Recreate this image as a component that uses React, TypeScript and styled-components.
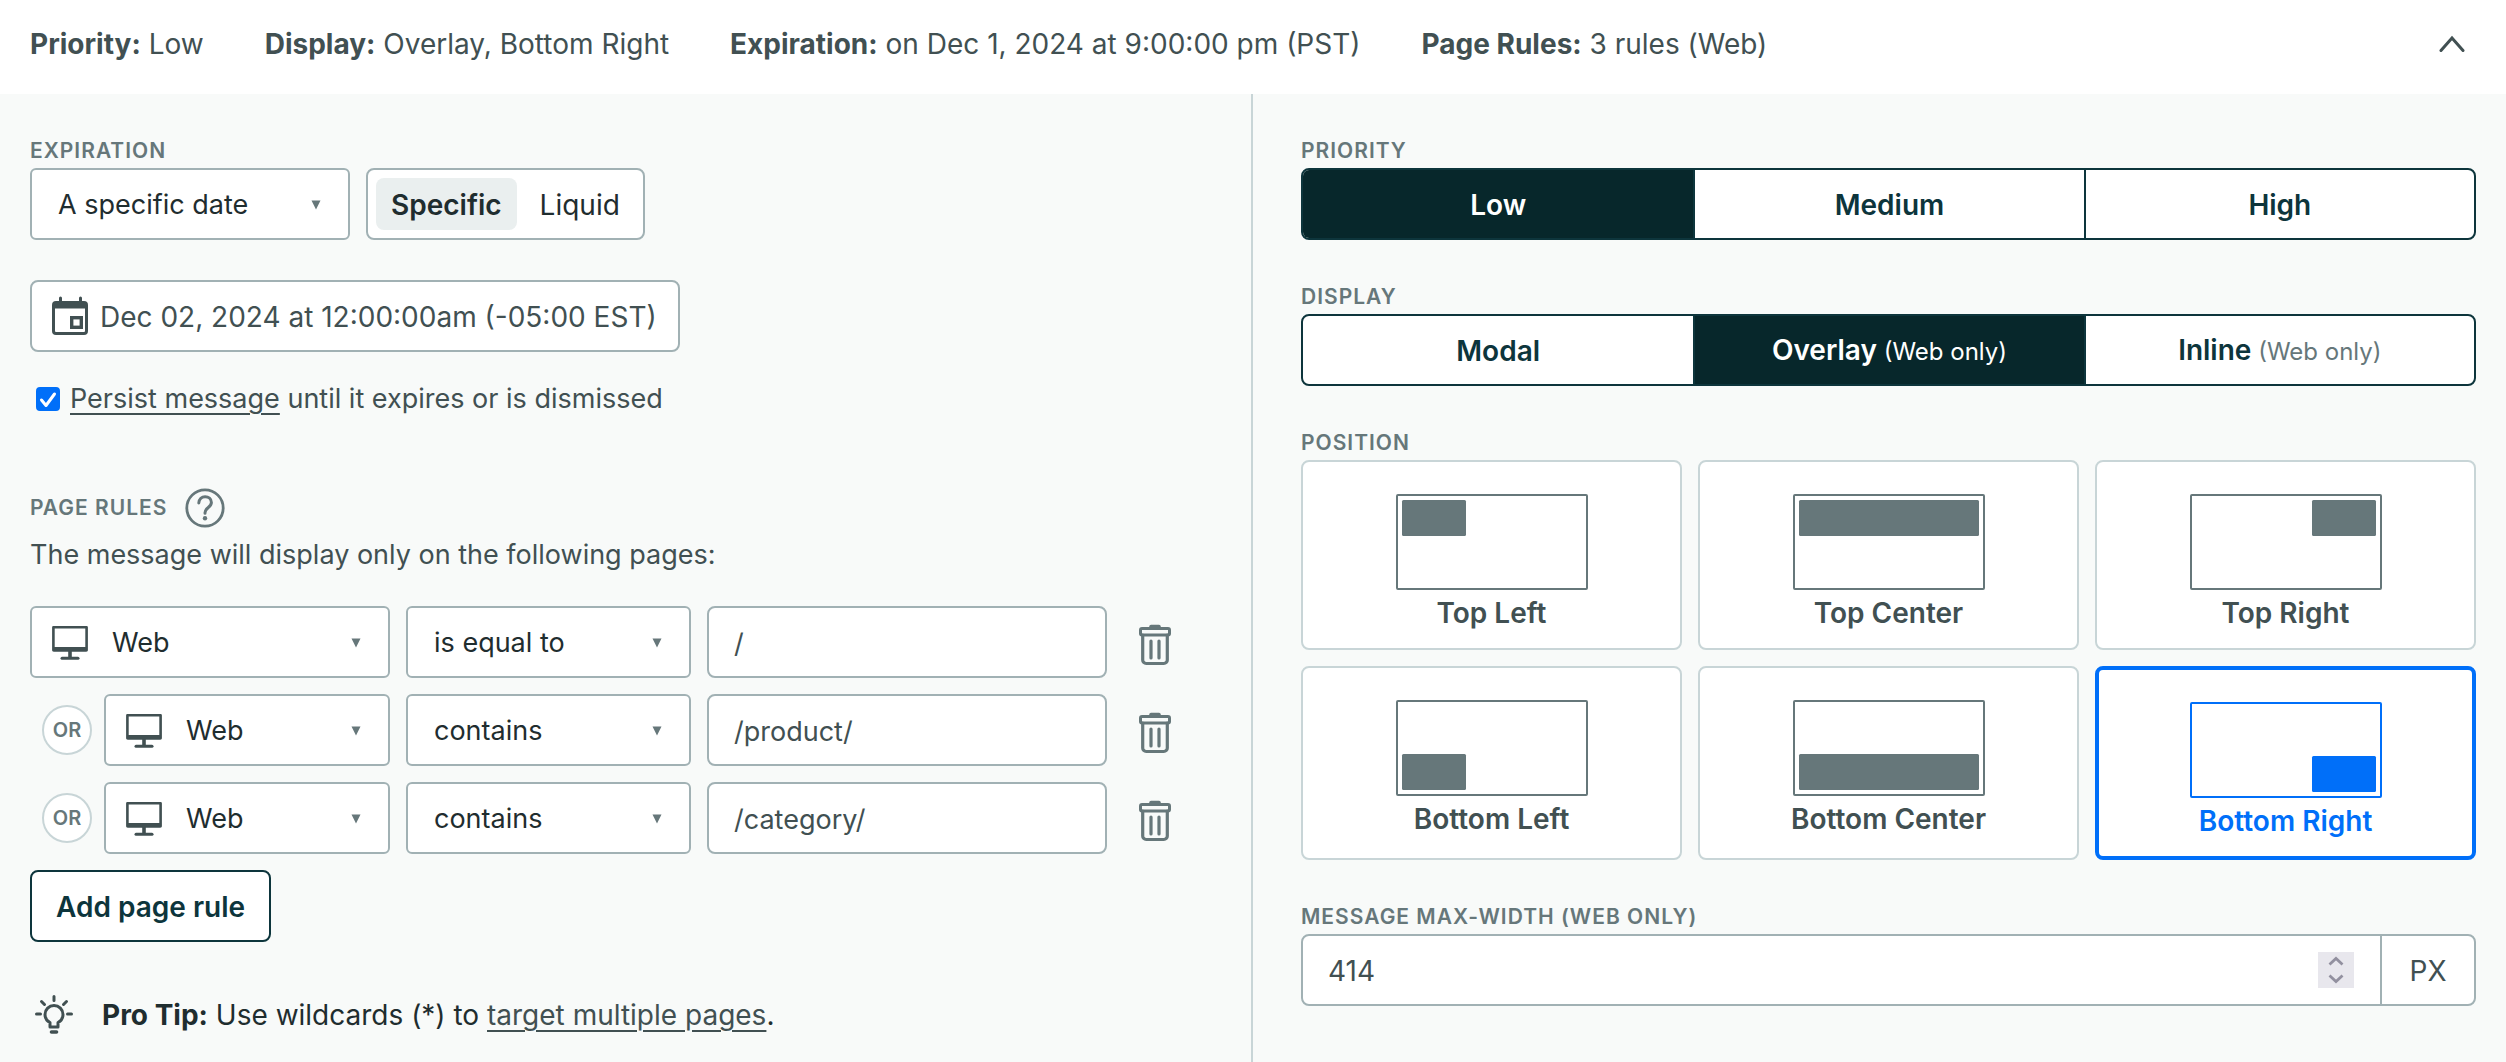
import React, { useState } from "react";
import styled, { createGlobalStyle, css } from "styled-components";

const c = {
  ink: "#1f2d2f",
  text: "#415052",
  muted: "#66777a",
  field: "#a1b1b4",
  line: "#c8d5d7",
  panel: "#f8faf9",
  brand: "#0d353c",
  brandDark: "#07272b",
  tint: "#eaefef",
  blue: "#006ff9",
};

const GlobalStyle = createGlobalStyle`
  *, *::before, *::after { box-sizing: border-box; }
  body {
    margin: 0;
    background: ${c.panel};
    color: ${c.text};
    font-family: Inter, "Liberation Sans", sans-serif;
    font-size: 28px;
    line-height: 42px;
  }
  button, input, select { font: inherit; color: inherit; margin: 0; }
  button { cursor: pointer; }
`;

const Header = styled.header`
  display: flex;
  align-items: center;
  justify-content: space-between;
  background: #fff;
  padding: 23px 34px 29px 30px;
`;
const Summary = styled.div`
  display: flex;
  flex-wrap: wrap;
  gap: 0 61px;
  strong { font-weight: 700; }
`;
const IconButton = styled.button`
  display: flex;
  align-items: center;
  justify-content: center;
  border: 0;
  padding: 0;
  background: transparent;
  color: ${c.muted};
`;
const CollapseButton = styled(IconButton)`
  width: 40px;
  height: 42px;
  color: ${c.text};
`;
const DeleteButton = styled(IconButton)`
  padding-top: 6px;
`;
const Columns = styled.main`
  display: grid;
  grid-template-columns: minmax(0, 1fr) minmax(0, 1fr);
`;
const LeftPanel = styled.section`
  border-right: 2px solid ${c.line};
  padding: 40px 64px 26px 30px;
`;
const RightPanel = styled.section`
  display: flex;
  flex-direction: column;
  gap: 40px;
  padding: 40px 30px 40px 48px;
`;
const labelText = css`
  display: block;
  color: ${c.muted};
  font-size: 21px;
  font-weight: 600;
  line-height: 34px;
  letter-spacing: 1px;
  text-transform: uppercase;
`;
const Label = styled.label`${labelText}`;
const GroupLabel = styled.div`${labelText}`;

const fieldBox = css`
  height: 72px;
  border: 2px solid ${c.field};
  border-radius: 8px;
  background: #fff;
`;
const Inline = styled.div`
  display: flex;
  gap: 16px;
`;
const SelectBox = styled.div<{ $width?: number }>`
  ${fieldBox}
  position: relative;
  display: flex;
  align-items: center;
  border-radius: 6px;
  min-width: 0;
  width: ${(p) => (p.$width ? `${p.$width}px` : "auto")};
  flex: ${(p) => (p.$width ? "none" : "1")};
`;
const Select = styled.select<{ $icon?: boolean }>`
  appearance: none;
  width: 100%;
  height: 100%;
  border: 0;
  background: transparent;
  color: ${c.ink};
  font-size: 27px;
  padding: 2px 48px 0 ${(p) => (p.$icon ? 80 : 26)}px;
`;
const Caret = styled.svg`
  position: absolute;
  right: 26px;
  top: 30px;
  pointer-events: none;
`;
const LeadIcon = styled.span`
  position: absolute;
  left: 20px;
  top: 16px;
  display: flex;
  color: ${c.text};
  pointer-events: none;
`;
const Toggle = styled.div`
  ${fieldBox}
  display: flex;
  gap: 8px;
  padding: 8px;
`;
const ToggleItem = styled.button<{ $on: boolean }>`
  border: 0;
  border-radius: 8px;
  padding: 2px 15px 0;
  background: ${(p) => (p.$on ? c.tint : "transparent")};
  color: ${c.ink};
  font-weight: ${(p) => (p.$on ? 600 : 400)};
`;
const DateField = styled.div`
  ${fieldBox}
  display: flex;
  align-items: center;
  gap: 12px;
  width: 650px;
  max-width: 100%;
  margin-top: 40px;
  padding: 0 20px;
`;
const BareInput = styled.input`
  flex: 1;
  min-width: 0;
  border: 0;
  padding: 2px 0 0;
  background: transparent;
  appearance: textfield;
  &::-webkit-inner-spin-button { appearance: none; display: none; }
`;
const CheckRow = styled.div`
  display: flex;
  align-items: center;
  gap: 10px;
  margin-top: 26px;
  padding-left: 6px;
  font-size: 27px;
`;
const CheckMark = styled.span`
  display: grid;
  > * { grid-area: 1 / 1; }
  svg { pointer-events: none; }
`;
const Checkbox = styled.input`
  appearance: none;
  width: 24px;
  height: 24px;
  border: 2px solid ${c.field};
  border-radius: 4px;
  background: #fff;
  &:checked { border-color: ${c.blue}; background: ${c.blue}; }
`;
const TextLink = styled.a`
  color: ${c.text};
  text-decoration: underline;
  text-decoration-thickness: 2px;
  text-underline-offset: 5px;
`;
const RulesHeading = styled.div`
  display: flex;
  align-items: center;
  gap: 18px;
  height: 48px;
  margin-top: 64px;
`;
const Paragraph = styled.p`
  margin: 2px 0 0;
  font-size: 27px;
`;
const Rules = styled.div`
  display: grid;
  gap: 16px;
  margin: 30px 0 16px;
`;
const Rule = styled.div`
  display: grid;
  grid-template-columns: 360px 285px minmax(0, 1fr) 64px;
  gap: 16px;
`;
const Platform = styled.div`
  display: flex;
  align-items: center;
  gap: 12px;
`;
const Or = styled.span`
  display: flex;
  flex: none;
  align-items: center;
  justify-content: center;
  width: 50px;
  height: 50px;
  margin-left: 12px;
  border: 2px solid ${c.line};
  border-radius: 50%;
  background: #fff;
  color: ${c.muted};
  font-size: 20px;
  font-weight: 600;
`;
const PathInput = styled.input`
  ${fieldBox}
  width: 100%;
  padding: 2px 25px 0;
  && { font-size: 27px; }
`;
const AddButton = styled.button`
  height: 72px;
  border: 2px solid ${c.brand};
  border-radius: 8px;
  padding: 2px 24px 0;
  background: #fff;
  color: ${c.brand};
  font-weight: 600;
`;
const Tip = styled.div`
  display: flex;
  align-items: center;
  gap: 28px;
  margin-top: 52px;
  padding-left: 4px;
  color: ${c.ink};
  strong { font-weight: 700; }
  > svg { color: ${c.text}; }
`;
const Segments = styled.div`
  display: grid;
  grid-template-columns: repeat(3, minmax(0, 1fr));
  height: 72px;
  border: 2px solid ${c.brand};
  border-radius: 8px;
  background: #fff;
  overflow: hidden;
`;
const Segment = styled.button<{ $on: boolean }>`
  border: 0;
  padding: 2px 0 0;
  background: ${(p) => (p.$on ? c.brandDark : "transparent")};
  color: ${(p) => (p.$on ? "#fff" : c.brand)};
  font-weight: 600;
  & + & { border-left: 2px solid ${c.brand}; }
  small {
    color: ${(p) => (p.$on ? "#fff" : c.muted)};
    font-size: 24px;
    font-weight: 400;
  }
`;
const Cards = styled.div`
  display: grid;
  grid-template-columns: repeat(3, minmax(0, 1fr));
  gap: 16px;
`;
const Card = styled.button<{ $on: boolean }>`
  display: flex;
  flex-direction: column;
  align-items: center;
  gap: 2px;
  border: ${(p) => (p.$on ? `4px solid ${c.blue}` : `2px solid ${c.line}`)};
  border-radius: 8px;
  padding: 32px 16px 14px;
  background: #fff;
  color: ${(p) => (p.$on ? c.blue : c.text)};
  font-weight: 600;
  svg { color: ${(p) => (p.$on ? c.blue : c.muted)}; }
`;
const NumberField = styled.div`
  ${fieldBox}
  display: flex;
  align-items: center;
  padding-left: 25px;
`;
const Stepper = styled.div`
  display: flex;
  flex-direction: column;
  width: 36px;
  height: 36px;
  margin-right: 26px;
  background: #e8e7ed;
`;
const StepButton = styled(IconButton)`
  flex: 1;
  color: #92909f;
`;
const Unit = styled.span`
  display: flex;
  align-items: center;
  justify-content: center;
  align-self: stretch;
  width: 94px;
  padding-top: 2px;
  border-left: 2px solid ${c.field};
`;

const CaretIcon = () => (
  <Caret width="12" height="10" viewBox="0 0 12 10" fill={c.muted} aria-hidden="true">
    <path d="M1.500 0.500h9L6 9.500z" />
  </Caret>
);
const MonitorIcon = () => (
  <svg width="36" height="36" viewBox="0 0 36 36" fill="none" stroke="currentColor" aria-hidden="true">
    <path d="M1.400 3.300h33.200v23H1.400z" strokeWidth="2.600" strokeLinejoin="round" />
    <path d="M1.400 25.200h33.200" strokeWidth="4.600" />
    <path d="M18 27v6" strokeWidth="3.600" />
    <path d="M10 34.200h16" strokeWidth="3" strokeLinecap="round" />
  </svg>
);
const CalendarIcon = () => (
  <svg width="36" height="40" viewBox="0 0 36 40" fill="none" stroke="currentColor" aria-hidden="true">
    <path d="M8.500 2v6M28.500 2v6" strokeWidth="3" strokeLinecap="round" />
    <rect x="1.500" y="6.500" width="33" height="31" rx="2.500" strokeWidth="3" />
    <path d="M2 9.500h32" strokeWidth="6" />
    <rect x="19.700" y="21.700" width="9.600" height="9.600" strokeWidth="3.400" />
  </svg>
);
const TrashIcon = () => (
  <svg width="32" height="42" viewBox="0 0 32 42" fill="none" stroke="currentColor" strokeLinejoin="round" strokeLinecap="round" aria-hidden="true">
    <path d="M12 2.500h8" strokeWidth="3.500" />
    <rect x="1.500" y="4.500" width="29" height="6.500" rx="1.500" strokeWidth="3" />
    <path d="M3.700 11v25a3.500 3.500 0 0 0 3.500 3.500h17.600a3.500 3.500 0 0 0 3.500-3.500V11" strokeWidth="3.200" />
    <path d="M12 17v17M20 17v17" strokeWidth="3.200" />
  </svg>
);
const HelpIcon = () => (
  <svg width="40" height="40" viewBox="0 0 40 40" fill="none" stroke="currentColor" strokeLinecap="round" aria-hidden="true">
    <circle cx="20" cy="20" r="18.200" strokeWidth="2.800" />
    <path d="M13.800 15c.3-4 3-6.300 6.300-6.300s6.300 2.200 6.300 5.800c0 5-6.400 5-6.400 10.300v.4" strokeWidth="3" />
    <circle cx="20" cy="30.300" r="2.200" fill="currentColor" stroke="none" />
  </svg>
);
const BulbIcon = () => (
  <svg width="40" height="42" viewBox="0 0 40 42" fill="none" stroke="currentColor" strokeWidth="3" strokeLinecap="round" strokeLinejoin="round" aria-hidden="true">
    <path d="M20 2.500v4M7.500 7.500l3 3M32.500 7.500l-3 3M2.500 20h4M33.500 20h4" />
    <path d="M16 33v-4.500c-3-1.500-5-4.500-5-8a9 9 0 0 1 18 0c0 3.500-2 6.500-5 8V33z" />
    <path d="M17.500 38h5" strokeWidth="3.600" />
  </svg>
);

const POSITIONS = [
  { name: "Top Left", x: 6, y: 6, w: 64 },
  { name: "Top Center", x: 6, y: 6, w: 180 },
  { name: "Top Right", x: 122, y: 6, w: 64 },
  { name: "Bottom Left", x: 6, y: 54, w: 64 },
  { name: "Bottom Center", x: 6, y: 54, w: 180 },
  { name: "Bottom Right", x: 122, y: 54, w: 64 },
];

type SegmentOption = { name: string; note?: string };

function SegmentedControl({ label, options, initial }: { label: string; options: SegmentOption[]; initial: string }) {
  const [value, setValue] = useState(initial);
  return (
    <div>
      <GroupLabel>{label}</GroupLabel>
      <Segments role="group" aria-label={label}>
        {options.map((o) => (
          <Segment key={o.name} type="button" $on={o.name === value} aria-pressed={o.name === value} onClick={() => setValue(o.name)}>
            {o.name}
            {o.note && <small> {o.note}</small>}
          </Segment>
        ))}
      </Segments>
    </div>
  );
}

function RuleRow({ first, operator, path }: { first: boolean; operator: string; path: string }) {
  return (
    <Rule>
      <Platform>
        {!first && <Or>OR</Or>}
        <SelectBox>
          <LeadIcon><MonitorIcon /></LeadIcon>
          <Select $icon aria-label="Platform" defaultValue="Web">
            <option>Web</option>
          </Select>
          <CaretIcon />
        </SelectBox>
      </Platform>
      <SelectBox>
        <Select aria-label="Condition" defaultValue={operator}>
          <option>is equal to</option>
          <option>contains</option>
        </Select>
        <CaretIcon />
      </SelectBox>
      <PathInput type="text" aria-label="Page path" defaultValue={path} />
      <DeleteButton type="button" aria-label="Delete rule"><TrashIcon /></DeleteButton>
    </Rule>
  );
}

export default function App() {
  const [mode, setMode] = useState("Specific");
  const [position, setPosition] = useState("Bottom Right");
  const [width, setWidth] = useState(414);
  return (
    <>
      <GlobalStyle />
      <Header>
        <Summary>
          <span><strong>Priority:</strong> Low</span>
          <span><strong>Display:</strong> Overlay, Bottom Right</span>
          <span><strong>Expiration:</strong> on Dec 1, 2024 at 9:00:00 pm (PST)</span>
          <span><strong>Page Rules:</strong> 3 rules (Web)</span>
        </Summary>
        <CollapseButton type="button" aria-label="Collapse">
          <svg width="26" height="18" viewBox="0 0 26 18" fill="none" stroke="currentColor" strokeWidth="3" strokeLinecap="round">
            <path d="M2 15.500 13 3l11 12.500" />
          </svg>
        </CollapseButton>
      </Header>
      <Columns>
        <LeftPanel>
          <Label htmlFor="expiration">Expiration</Label>
          <Inline>
            <SelectBox $width={320}>
              <Select id="expiration" defaultValue="A specific date">
                <option>A specific date</option>
              </Select>
              <CaretIcon />
            </SelectBox>
            <Toggle role="group" aria-label="Date type">
              {["Specific", "Liquid"].map((m) => (
                <ToggleItem key={m} type="button" $on={m === mode} aria-pressed={m === mode} onClick={() => setMode(m)}>
                  {m}
                </ToggleItem>
              ))}
            </Toggle>
          </Inline>
          <DateField>
            <CalendarIcon />
            <BareInput type="text" aria-label="Expiration date" defaultValue="Dec 02, 2024 at 12:00:00am (-05:00 EST)" />
          </DateField>
          <CheckRow>
            <CheckMark>
              <Checkbox id="persist" type="checkbox" defaultChecked />
              <svg width="24" height="24" viewBox="0 0 24 24" fill="none" stroke="#fff" strokeWidth="3" strokeLinecap="round" strokeLinejoin="round">
                <path d="m5.500 13 4.500 5.500L18.500 7" />
              </svg>
            </CheckMark>
            <label htmlFor="persist">
              <TextLink href="#persist">Persist message</TextLink> until it expires or is dismissed
            </label>
          </CheckRow>
          <RulesHeading>
            <GroupLabel>Page Rules</GroupLabel>
            <IconButton type="button" aria-label="Help"><HelpIcon /></IconButton>
          </RulesHeading>
          <Paragraph>The message will display only on the following pages:</Paragraph>
          <Rules>
            <RuleRow first operator="is equal to" path="/" />
            <RuleRow first={false} operator="contains" path="/product/" />
            <RuleRow first={false} operator="contains" path="/category/" />
          </Rules>
          <AddButton type="button">Add page rule</AddButton>
          <Tip>
            <BulbIcon />
            <span>
              <strong>Pro Tip:</strong> Use wildcards (*) to <TextLink href="#wildcards">target multiple pages</TextLink>.
            </span>
          </Tip>
        </LeftPanel>
        <RightPanel>
          <SegmentedControl label="Priority" initial="Low" options={[{ name: "Low" }, { name: "Medium" }, { name: "High" }]} />
          <SegmentedControl
            label="Display"
            initial="Overlay"
            options={[{ name: "Modal" }, { name: "Overlay", note: "(Web only)" }, { name: "Inline", note: "(Web only)" }]}
          />
          <div>
            <GroupLabel>Position</GroupLabel>
            <Cards role="group" aria-label="Position">
              {POSITIONS.map((p) => (
                <Card key={p.name} type="button" $on={p.name === position} aria-pressed={p.name === position} onClick={() => setPosition(p.name)}>
                  <svg width="192" height="96" viewBox="0 0 192 96" fill="none" aria-hidden="true">
                    <rect x="1" y="1" width="190" height="94" rx="1" stroke="currentColor" strokeWidth="2" />
                    <rect x={p.x} y={p.y} width={p.w} height="36" rx="1.500" fill="currentColor" />
                  </svg>
                  {p.name}
                </Card>
              ))}
            </Cards>
          </div>
          <div>
            <Label htmlFor="max-width">Message max-width (Web only)</Label>
            <NumberField>
              <BareInput id="max-width" type="number" value={width} onChange={(e) => setWidth(Number(e.target.value))} />
              <Stepper>
                <StepButton type="button" aria-label="Increase" onClick={() => setWidth(width + 1)}>
                  <svg width="16" height="10" viewBox="0 0 16 10" fill="none" stroke="currentColor" strokeWidth="2.800"><path d="M1.500 8.500 8 2.500l6.500 6" /></svg>
                </StepButton>
                <StepButton type="button" aria-label="Decrease" onClick={() => setWidth(width - 1)}>
                  <svg width="16" height="10" viewBox="0 0 16 10" fill="none" stroke="currentColor" strokeWidth="2.800"><path d="m1.500 1.500 6.500 6 6.500-6" /></svg>
                </StepButton>
              </Stepper>
              <Unit>PX</Unit>
            </NumberField>
          </div>
        </RightPanel>
      </Columns>
    </>
  );
}
